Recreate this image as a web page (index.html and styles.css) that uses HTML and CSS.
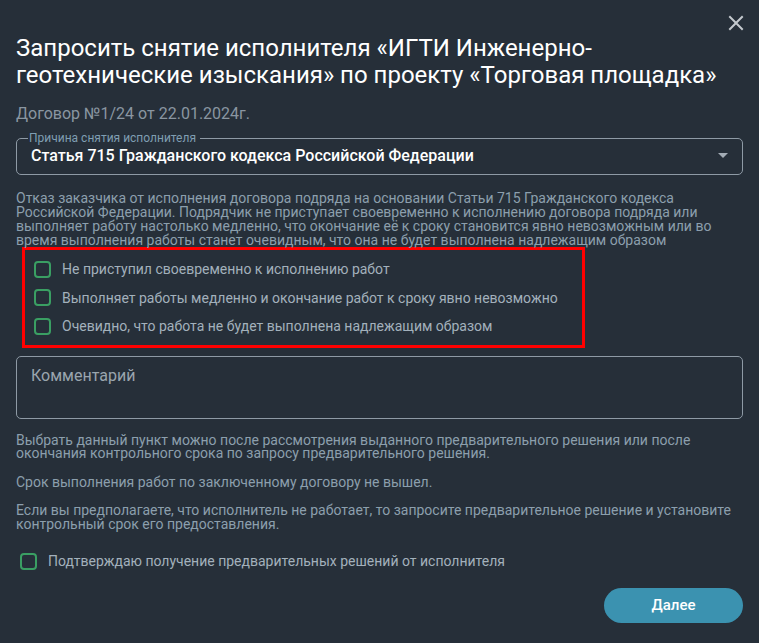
FILE: index.html
```html
<!DOCTYPE html>
<html lang="ru">
<head>
<meta charset="utf-8">
<link rel="stylesheet" href="styles.css">
</head>
<body>
<div class="dialog">
  <button class="close" aria-label="Закрыть">
    <svg width="16" height="16" viewBox="0 0 16 16"><path d="M2 2L14 14M14 2L2 14" stroke="#c4c9ce" stroke-width="2" stroke-linecap="square"/></svg>
  </button>
  <h1 class="title">Запросить снятие исполнителя «ИГТИ Инженерно-геотехнические изыскания» по проекту «Торговая площадка»</h1>
  <div class="subtitle">Договор №1/24 от 22.01.2024г.</div>

  <fieldset class="select">
    <legend class="select-label">Причина снятия исполнителя</legend>
    <div class="select-row">
      <span class="select-value">Статья 715 Гражданского кодекса Российской Федерации</span>
      <span class="caret"></span>
    </div>
  </fieldset>

  <p class="desc">Отказ заказчика от исполнения договора подряда на основании Статьи 715 Гражданского кодекса Российской Федерации. Подрядчик не приступает своевременно к исполнению договора подряда или выполняет работу настолько медленно, что окончание её к сроку становится явно невозможным или во время выполнения работы станет очевидным, что она не будет выполнена надлежащим образом</p>

  <div class="options">
    <label class="check"><span class="box"></span><span>Не приступил своевременно к исполнению работ</span></label>
    <label class="check"><span class="box"></span><span>Выполняет работы медленно и окончание работ к сроку явно невозможно</span></label>
    <label class="check"><span class="box"></span><span>Очевидно, что работа не будет выполнена надлежащим образом</span></label>
  </div>

  <div class="comment">Комментарий</div>

  <p class="note">Выбрать данный пункт можно после рассмотрения выданного предварительного решения или после окончания контрольного срока по запросу предварительного решения.</p>
  <p class="note">Срок выполнения работ по заключенному договору не вышел.</p>
  <p class="note">Если вы предполагаете, что исполнитель не работает, то запросите предварительное решение и установите контрольный срок его предоставления.</p>

  <label class="check confirm"><span class="box"></span><span>Подтверждаю получение предварительных решений от исполнителя</span></label>

  <div class="footer">
    <button class="next">Далее</button>
  </div>
</div>
</body>
</html>
```
FILE: styles.css
```css
* { box-sizing: border-box; }
html, body { margin: 0; padding: 0; }
body {
  background: #262f39;
  font-family: Roboto, "Noto Sans", sans-serif;
  width: 759px;
  height: 643px;
  overflow: hidden;
}
.dialog {
  position: relative;
  padding: 35px 16px 0 16px;
}
.close {
  position: absolute;
  top: 15px;
  right: 15px;
  background: none;
  border: 0;
  padding: 0;
  width: 16px;
  height: 16px;
  display: flex;
}
.title {
  margin: 0;
  font-size: 24px;
  line-height: 27px;
  font-weight: 400;
  color: #ffffff;
  padding-right: 10px;
}
.subtitle {
  margin-top: 15px;
  font-size: 16px;
  line-height: 20px;
  color: #8a96a1;
}
.select {
  margin: 8px 0 0 0;
  padding: 0 14px 0 14px;
  border: 1px solid #8e9aa5;
  border-radius: 5px;
  height: 43px;
  min-width: 0;
}
.select-label {
  font-size: 12px;
  line-height: 12px;
  color: #7f9eb2;
  padding: 0 4px 0 1px;
  margin-left: -3px;
}
.select-row {
  display: flex;
  align-items: center;
  justify-content: space-between;
  height: 24px;
  margin-top: -1px;
}
.select-value {
  font-size: 16px;
  font-weight: 500;
  color: #ffffff;
}
.caret {
  width: 0;
  height: 0;
  border-left: 5px solid transparent;
  border-right: 5px solid transparent;
  border-top: 5px solid #a3acb5;
  margin-right: 0;
}
.desc {
  margin: 16px 0 0 0;
  font-size: 14px;
  line-height: 14px;
  color: #8c9fad;
}
.options {
  margin: 0 0 0 6px;
  width: 563px;
  border: 3px solid #ff0000;
  padding: 5px 9px 4px 9px;
  display: flex;
  flex-direction: column;
}
.check {
  display: flex;
  align-items: center;
  gap: 11px;
  height: 28.5px;
  font-size: 14px;
  color: #a3b1bc;
}
.box {
  width: 17px;
  height: 17px;
  border: 2px solid #3a9f63;
  border-radius: 4px;
  flex: none;
}
.comment {
  margin-top: 8px;
  height: 63px;
  border: 1px solid #8e9aa5;
  border-radius: 5px;
  padding: 10px 14px;
  font-size: 16px;
  line-height: 18px;
  color: #9aa5ae;
}
.note {
  margin: 15px 0 0 0;
  font-size: 14px;
  line-height: 13.5px;
  color: #8c9fad;
}
.note + .note { margin-top: 15px; }
.confirm {
  margin-top: 16px;
  margin-left: 4px;
}
.footer {
  display: flex;
  justify-content: flex-end;
  margin-top: 12px;
}
.next {
  width: 139px;
  height: 35px;
  border: 0;
  border-radius: 18px;
  background: #3b92b0;
  color: #ffffff;
  font-family: Roboto, sans-serif;
  font-size: 15px;
  font-weight: 500;
}
```
